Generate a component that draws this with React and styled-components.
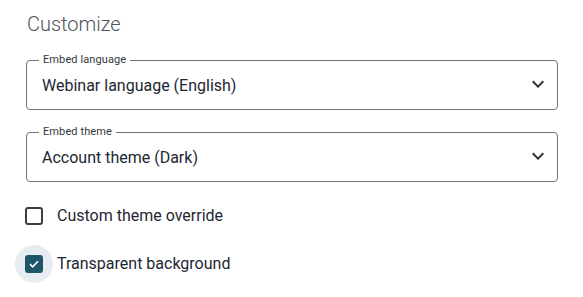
import React, { useState } from 'react'
import styled, { createGlobalStyle } from 'styled-components'

const GlobalStyle = createGlobalStyle`
  html, body {
    margin: 0;
    padding: 0;
    background: #ffffff;
  }
  body {
    font-family: Roboto, "Noto Sans", "Liberation Sans", sans-serif;
    color: #1d2733;
  }
`

const Panel = styled.section`
  width: 532px;
  padding: 12px 0 0 26px;
  display: flex;
  flex-direction: column;
`

const Heading = styled.h2`
  margin: 0 0 24px 1px;
  font-size: 20px;
  line-height: 24px;
  font-weight: 300;
  color: #4f5458;
`

const Field = styled.div`
  position: relative;
  height: 50px;
  margin-bottom: ${(p) => p.$gap || 0}px;
  display: flex;
  align-items: center;
`

const Outline = styled.fieldset`
  position: absolute;
  inset: -6px 0 0 0;
  margin: 0;
  padding: 0 12px;
  border: 1px solid #6e7276;
  border-radius: 4px;
  pointer-events: none;
`

const Legend = styled.legend`
  padding: 0 4px;
  font-size: 11px;
  line-height: 12px;
  color: #33383d;
  letter-spacing: 0.1px;
`

const Value = styled.div`
  flex: 1;
  padding-left: 16px;
  padding-top: 1px;
  font-size: 16px;
  line-height: 20px;
  color: #1d2733;
`

const Chevron = styled.svg`
  width: 24px;
  height: 24px;
  margin-right: 8px;
  margin-top: -2px;
  fill: #2f3438;
`

const CheckRow = styled.label`
  display: flex;
  align-items: center;
  margin-left: -11px;
  margin-top: ${(p) => p.$top || 0}px;
  cursor: pointer;
`

const Control = styled.span`
  width: 38px;
  height: 38px;
  border-radius: 50%;
  display: flex;
  align-items: center;
  justify-content: center;
  background: ${(p) => (p.$checked ? '#e6ecef' : 'transparent')};
`

const Box = styled.span`
  box-sizing: border-box;
  width: 18px;
  height: 18px;
  border-radius: 3px;
  border: 2px solid ${(p) => (p.$checked ? '#1e5669' : '#3a3f44')};
  background: ${(p) => (p.$checked ? '#1e5669' : 'transparent')};
  display: flex;
  align-items: center;
  justify-content: center;
`

const CheckText = styled.span`
  margin-left: 4px;
  font-size: 16px;
  line-height: 20px;
  color: #1d2733;
`

function Select({ label, value, gap }) {
  return (
    <Field $gap={gap}>
      <Outline>
        <Legend>{label}</Legend>
      </Outline>
      <Value>{value}</Value>
      <Chevron viewBox="0 0 24 24">
        <path d="M16.59 8.59 12 13.17 7.41 8.59 6 10l6 6 6-6z" />
      </Chevron>
    </Field>
  )
}

function Check({ label, checked, onToggle, top }) {
  return (
    <CheckRow $top={top} onClick={onToggle}>
      <Control $checked={checked}>
        <Box $checked={checked}>
          {checked && (
            <svg width="10" height="8" viewBox="0 0 10 8">
              <path d="M1 4.2 3.7 6.8 9 1.3" fill="none" stroke="#ffffff" strokeWidth="1.6" />
            </svg>
          )}
        </Box>
      </Control>
      <CheckText>{label}</CheckText>
    </CheckRow>
  )
}

export default function App() {
  const [custom, setCustom] = useState(false)
  const [transparent, setTransparent] = useState(true)
  return (
    <>
      <GlobalStyle />
      <Panel>
        <Heading>Customize</Heading>
        <Select label="Embed language" value="Webinar language (English)" gap={22} />
        <Select label="Embed theme" value="Account theme (Dark)" />
        <Check label="Custom theme override" checked={custom} onToggle={() => setCustom(!custom)} top={15} />
        <Check label="Transparent background" checked={transparent} onToggle={() => setTransparent(!transparent)} top={10} />
      </Panel>
    </>
  )
}
